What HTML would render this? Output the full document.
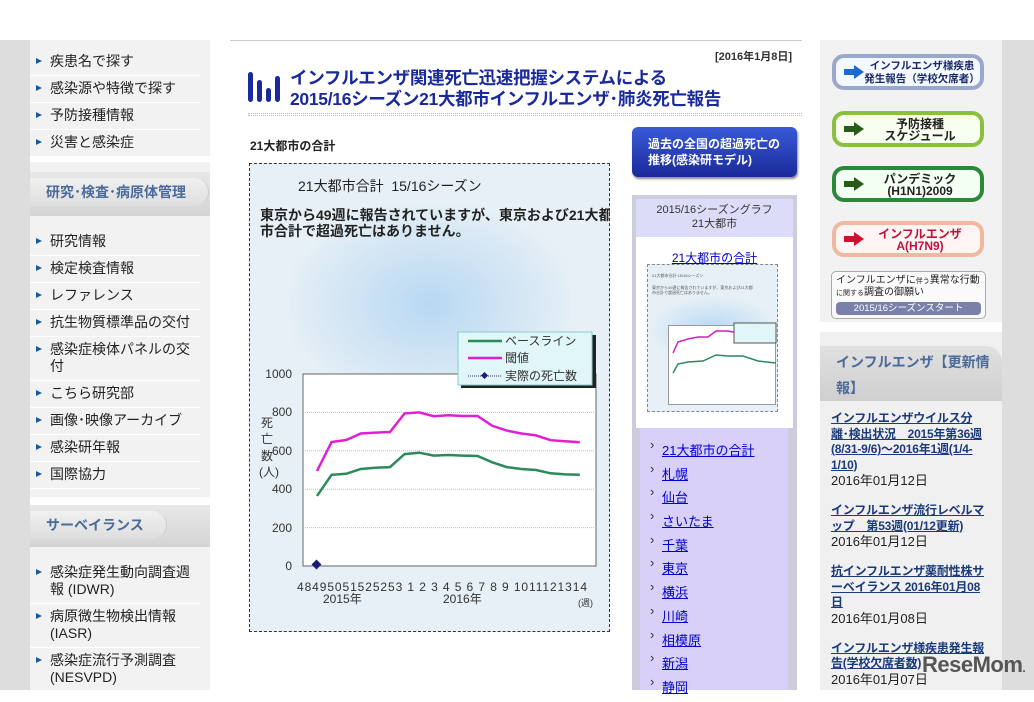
<!DOCTYPE html>
<html><head><meta charset="utf-8"><style>
*{margin:0;padding:0;box-sizing:border-box}
body{width:1034px;height:690px;overflow:hidden;position:relative;background:#fff;font-family:"Liberation Sans","Noto Sans CJK JP",sans-serif;font-size:13px;color:#222}
.a{position:absolute}
.lnav{left:30px;width:180px;background:#f2f2f2}
.lnav ul{list-style:none;padding:0 10px 0 0}
.lnav li{position:relative;padding:4px 0 5px 20px;border-bottom:1px solid #fff;font-size:14px;line-height:17px;color:#222}
.lnav li:before{content:"";position:absolute;left:6px;top:9px;border-left:6px solid #1a5a9a;border-top:3.5px solid transparent;border-bottom:3.5px solid transparent}
.hdr{position:absolute;left:0;width:180px;height:44px;background:linear-gradient(#e8e8e8,#d4d4d4)}
.hdr span{position:absolute;left:0;top:6px;height:28px;border-radius:0 14px 14px 0;background:linear-gradient(#f0f0f0,#dedede);border-right:1px solid #ccc;color:#4a6a9a;font-weight:bold;font-size:14px;line-height:28px;padding:0 22px 0 16px}
.cities a{display:block;color:#0000cc;text-decoration:underline;font-size:13px;height:23.7px;position:relative;padding-left:14px}
.cities a:before{content:"›";position:absolute;left:2px;top:-3px;color:#333;font-size:13px}
.btn{position:absolute;left:832px;width:152px;height:36px;border-radius:12px;border:4px solid;font-weight:bold;font-size:11px;line-height:12px;text-align:center;white-space:nowrap}
.arr{position:absolute;left:8px;top:7px;width:20px;height:14px}
.news a{color:#1a3a7a;font-weight:bold;text-decoration:underline;font-size:12px;line-height:15.5px;display:block;letter-spacing:-0.2px}
.news div{font-size:13px;line-height:16px;margin-bottom:14px;color:#222}
</style></head><body>
<div class="a" style="left:0;top:40px;width:30px;height:650px;background:#ddd"></div>
<div class="a" style="left:1002px;top:40px;width:32px;height:650px;background:#ddd"></div>
<div class="a" style="left:230px;top:40px;width:572px;height:1px;background:#ccc"></div>

<div class="a lnav" style="top:40px;height:457px"></div>
<div class="a lnav" style="top:49px;background:none"><ul>
<li>疾患名で探す</li><li>感染源や特徴で探す</li><li>予防接種情報</li><li>災害と感染症</li></ul></div>
<div class="a" style="left:30px;top:156px;width:180px;height:6px;background:#fff"></div>
<div class="a" style="left:30px;top:172px;width:180px;height:44px"><div class="hdr"><span>研究･検査･病原体管理</span></div></div>
<div class="a lnav" style="top:229px;background:none"><ul>
<li>研究情報</li><li>検定検査情報</li><li>レファレンス</li><li>抗生物質標準品の交付</li><li>感染症検体パネルの交付</li><li>こちら研究部</li><li>画像･映像アーカイブ</li><li>感染研年報</li><li>国際協力</li></ul></div>
<div class="a" style="left:30px;top:497px;width:180px;height:8px;background:#fff"></div>
<div class="a lnav" style="top:505px;height:185px"></div>
<div class="a" style="left:30px;top:505px;width:180px;height:42px"><div class="hdr" style="height:42px"><span>サーベイランス</span></div></div>
<div class="a lnav" style="top:560px;background:none"><ul>
<li>感染症発生動向調査週報 (IDWR)</li><li>病原微生物検出情報 (IASR)</li><li>感染症流行予測調査 (NESVPD)</li></ul></div>

<div class="a" style="left:715px;top:48px;font-size:11px;font-weight:bold;color:#333">[2016年1月8日]</div>
<svg class="a" style="left:248px;top:70px" width="36" height="34"><g fill="#1a2a9a"><rect x="0" y="2" width="5" height="30" rx="2.5"/><rect x="9" y="10" width="5" height="22" rx="2.5"/><rect x="18" y="18" width="5" height="14" rx="2.5"/><rect x="27" y="6" width="5" height="26" rx="2.5"/></g></svg>
<div class="a" style="left:290px;top:68px;font-size:17.5px;font-weight:bold;color:#1a2a9a;line-height:21px;letter-spacing:-0.3px">インフルエンザ関連死亡迅速把握システムによる<br>2015/16シーズン21大都市インフルエンザ･肺炎死亡報告</div>
<div class="a" style="left:248px;top:113px;width:554px;height:3px;border-top:1px dotted #bbb;border-bottom:1px dotted #bbb"></div>
<div class="a" style="left:250px;top:137px;font-size:12px;font-weight:bold">21大都市の合計</div>
<div class="a" style="left:632px;top:127px;width:165px;height:50px;border-radius:6px;background:linear-gradient(#3a5ad8,#1a2a9a);box-shadow:1px 2px 2px #888;color:#fff;font-weight:bold;font-size:12px;line-height:16px;padding:9px 0 0 16px">過去の全国の超過死亡の<br>推移(感染研モデル)</div>

<div class="a" style="left:249px;top:163px;width:361px;height:469px;border:1px dashed #333;background:#e6f0f6">
<div class="a" style="left:40px;top:40px;width:280px;height:200px;background:radial-gradient(ellipse at center,#b8d8f4 0%,#d4e6f4 45%,rgba(230,240,246,0) 75%)"></div>
<div class="a" style="left:48px;top:12px;font-size:14px">21大都市合計&nbsp; 15/16シーズン</div>
<div class="a" style="left:10px;top:43px;font-size:14px;font-weight:bold;line-height:16px;white-space:nowrap;width:350px;overflow:hidden">東京から49週に報告されていますが、東京および21大都<br>市合計で超過死亡はありません。</div>
</div>
<svg class="a" style="left:249px;top:163px" width="361" height="469" font-family="Liberation Sans,Noto Sans CJK JP,sans-serif">
<g transform="translate(-249,-163)">
<rect x="303" y="374" width="293" height="192" fill="#fff" stroke="#666"/>
<g stroke="#9cc" stroke-width="1" stroke-dasharray="1,1"><line x1="303" x2="596" y1="412.4" y2="412.4"/><line x1="303" x2="596" y1="450.8" y2="450.8"/><line x1="303" x2="596" y1="489.2" y2="489.2"/><line x1="303" x2="596" y1="527.6" y2="527.6"/></g>
<g font-size="12" fill="#333" text-anchor="end"><text x="292" y="378">1000</text><text x="292" y="416">800</text><text x="292" y="455">600</text><text x="292" y="493">400</text><text x="292" y="532">200</text><text x="292" y="570">0</text></g>
<g font-size="12" fill="#333"><text x="261" y="427">死</text><text x="261" y="443">亡</text><text x="261" y="460">数</text><text x="259" y="476">(人)</text></g>
<polyline fill="none" stroke="#e020d0" stroke-width="2.5" points="317,471 331.6,442 346.2,440 360.8,433.5 375.4,432.6 390,432 404.6,413.4 419.2,412.4 433.8,416.2 448.4,415.3 463,416 477.6,416 492.2,425.8 506.8,430.6 521.4,433.5 536,435.4 550.6,440.2 565.2,441.2 579.8,442.2"/>
<polyline fill="none" stroke="#2a8a5a" stroke-width="2.5" points="317,495.9 331.6,474.8 346.2,473.8 360.8,469 375.4,467.7 390,467.1 404.6,454.1 419.2,452.7 433.8,455.6 448.4,455 463,455.6 477.6,456 492.2,462.3 506.8,467.1 521.4,469 536,470 550.6,473.3 565.2,474.4 579.8,474.8"/>
<rect x="313" y="561" width="7" height="7" fill="#1a1a7a" transform="rotate(45 316.5 564.5)"/>
<text x="297" y="591" font-size="12" fill="#333" textLength="290" lengthAdjust="spacing">48495051525253 1  2  3  4  5  6  7  8  9 1011121314</text>
<text x="323" y="603" font-size="12" fill="#333">2015年</text><text x="443" y="603" font-size="12" fill="#333">2016年</text>
<text x="578" y="606" font-size="9" fill="#333">(週)</text>
<rect x="461" y="335" width="135" height="53" fill="#222"/>
<rect x="458" y="332" width="134" height="53" fill="#e0f6f8" stroke="#8cc"/>
<line x1="468" x2="502" y1="341" y2="341" stroke="#2a8a5a" stroke-width="2.5"/><text x="505" y="345" font-size="12" fill="#333">ベースライン</text>
<line x1="468" x2="502" y1="358" y2="358" stroke="#e020d0" stroke-width="2.5"/><text x="505" y="362" font-size="12" fill="#333">閾値</text>
<line x1="468" x2="502" y1="376" y2="376" stroke="#336" stroke-dasharray="1,1"/><rect x="482" y="373" width="5" height="5" fill="#1a1a7a" transform="rotate(45 484.5 375.5)"/><text x="505" y="380" font-size="12" fill="#333">実際の死亡数</text>
</g></svg>

<div class="a" style="left:632px;top:195px;width:165px;height:495px;background:#ccd"></div>
<div class="a" style="left:636px;top:199px;width:157px;height:38px;background:#dcdcf8;text-align:center;font-size:11px;line-height:14px;padding-top:4px;color:#333">2015/16シーズングラフ<br>21大都市</div>
<div class="a" style="left:636px;top:237px;width:157px;height:191px;background:#fff"></div>
<div class="a" style="left:636px;top:249px;width:157px;text-align:center;font-size:12px;color:#0000cc;text-decoration:underline">21大都市の合計</div>
<div class="a" style="left:647px;top:264px;width:131px;height:148px;background:#e6f0f6;border:1px dashed #888">
<div class="a" style="left:0;top:30px;width:130px;height:70px;background:radial-gradient(#b8d8f4,rgba(230,240,246,0) 70%)"></div>
<div class="a" style="left:20px;top:60px;width:108px;height:80px;background:#fff;border:1px solid #999"></div>
<svg class="a" style="left:0;top:0" width="131" height="148"><polyline fill="none" stroke="#d020c0" stroke-width="1.5" points="25,88 30,77 40,74 50,72 60,72 68,66 80,66 90,68 100,68 110,73 120,76 128,78"/><polyline fill="none" stroke="#2a8a5a" stroke-width="1.5" points="25,108 30,99 40,97 55,96 68,90 80,91 95,91 110,96 128,98"/><rect x="86" y="58" width="42" height="20" fill="#e0f6f8" stroke="#555"/><g fill="#555" font-size="4"><text x="4" y="12">21大都市合計 15/16シーズン</text><text x="4" y="24">東京から49週に報告されていますが、東京および21大都</text><text x="4" y="29">市合計で超過死亡はありません。</text></g></svg>
</div>
<div class="a" style="left:640px;top:428px;width:148px;height:262px;background:#d8d0f8"></div>
<div class="a cities" style="left:648px;top:440px">
<a>21大都市の合計</a><a>札幌</a><a>仙台</a><a>さいたま</a><a>千葉</a><a>東京</a><a>横浜</a><a>川崎</a><a>相模原</a><a>新潟</a><a>静岡</a></div>

<div class="a" style="left:820px;top:40px;width:182px;height:282px;background:#f2f2f2"></div>
<div class="btn" style="top:54px;border-color:#9aa8cc;background:#f4f8ff;color:#1a2a6a"><svg class="arr" viewBox="0 0 20 14"><path d="M0 4h10V0l10 7-10 7v-4H0z" fill="#1a6ad0"/></svg><div style="padding:2px 0 0 28px;font-size:10.5px;line-height:13px">インフルエンザ様疾患<br>発生報告（学校欠席者）</div></div>
<div class="btn" style="top:111px;border-color:#8ac040;background:#f8fff0;color:#222"><svg class="arr" viewBox="0 0 20 14"><path d="M0 4h10V0l10 7-10 7v-4H0z" fill="#2a5a1a"/></svg><div style="padding:3px 0 0 24px;font-size:12px">予防接種<br>スケジュール</div></div>
<div class="btn" style="top:166px;border-color:#2a8a3a;background:#f4fff4;color:#222"><svg class="arr" viewBox="0 0 20 14"><path d="M0 4h10V0l10 7-10 7v-4H0z" fill="#2a5a1a"/></svg><div style="padding:3px 0 0 24px;font-size:12px">パンデミック<br>(H1N1)2009</div></div>
<div class="btn" style="top:221px;border-color:#f0b8a0;background:#fff6f4;color:#c01040"><svg class="arr" viewBox="0 0 20 14"><path d="M0 4h10V0l10 7-10 7v-4H0z" fill="#d01030"/></svg><div style="padding:3px 0 0 24px;font-size:12px">インフルエンザ<br>A(H7N9)</div></div>
<div class="a" style="left:831px;top:271px;width:155px;height:48px;border:1px solid #aaa;border-radius:5px;background:#fafafa;font-size:10px;line-height:11px;padding:3px 4px;color:#222;white-space:nowrap">インフルエンザに<span style="font-size:7px">伴う</span>異常な行動<br><span style="font-size:7px">に関する</span>調査の御願い<div style="margin-top:3px;background:#7a80aa;color:#fff;border-radius:4px;text-align:center;font-size:9.5px;line-height:13px">2015/16シーズンスタート</div></div>
<div class="a" style="left:820px;top:322px;width:182px;height:10px;background:#fff"></div>
<div class="a" style="left:820px;top:332px;width:182px;height:358px;background:#f0f0f0"></div>
<div class="a" style="left:820px;top:346px;width:182px;height:55px;background:linear-gradient(#e0e0e0,#cfcfcf);border-radius:0 16px 0 0;color:#4a6a9a;font-weight:bold;font-size:14px;line-height:26px;padding:3px 0 0 16px">インフルエンザ【更新情<br>報】</div>
<div class="a news" style="left:831px;top:411px;width:158px">
<a>インフルエンザウイルス分離･検出状況　2015年第36週(8/31-9/6)～2016年1週(1/4-1/10)</a><div>2016年01月12日</div>
<a>インフルエンザ流行レベルマップ　第53週(01/12更新)</a><div>2016年01月12日</div>
<a>抗インフルエンザ薬耐性株サーベイランス 2016年01月08日</a><div>2016年01月08日</div>
<a>インフルエンザ様疾患発生報告(学校欠席者数)</a><div>2016年01月07日</div>
</div>
<div class="a" style="left:922px;top:652px;font-size:22px;font-weight:bold;color:#555;letter-spacing:-0.5px">ReseMom<span style="font-size:12px">.</span></div>
</body></html>
